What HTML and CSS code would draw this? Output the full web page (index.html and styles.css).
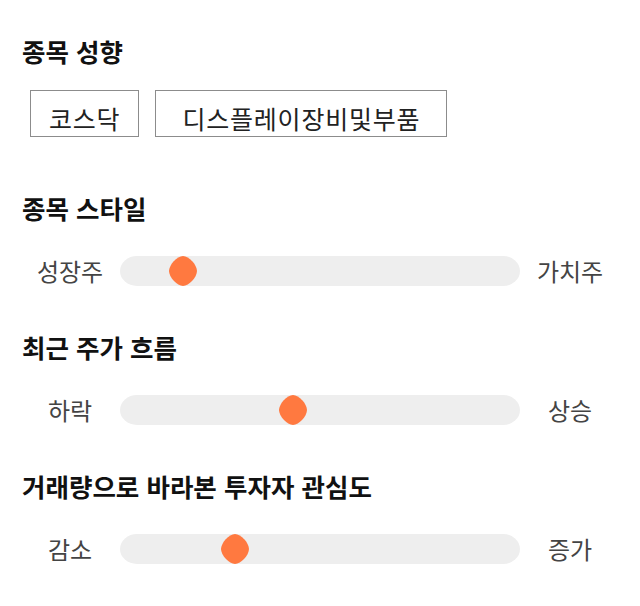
FILE: index.html
```html
<!DOCTYPE html>
<html lang="ko">
<head>
    <meta charset="UTF-8">
    <meta name="viewport" content="width=device-width, initial-scale=1.0">
    <title>종목 분석</title>
    <link rel="stylesheet" href="styles.css">
</head>
<body>
    <div class="page">
        <section class="block">
            <h2 class="block-title">종목 성향</h2>
            <div class="tags">
                <span class="tag">코스닥</span>
                <span class="tag tag-wide">디스플레이장비및부품</span>
            </div>
        </section>

        <section class="block">
            <h2 class="block-title">종목 스타일</h2>
            <div class="scale">
                <span class="scale-label">성장주</span>
                <div class="track">
                    <svg class="thumb" style="left: 12.25%" viewBox="0 0 28 30" width="28" height="30">
                        <path d="M14 0 C20 0 28 9 28 15 C28 21 20 30 14 30 C8 30 0 21 0 15 C0 9 8 0 14 0 Z" />
                    </svg>
                </div>
                <span class="scale-label">가치주</span>
            </div>
        </section>

        <section class="block">
            <h2 class="block-title">최근 주가 흐름</h2>
            <div class="scale">
                <span class="scale-label">하락</span>
                <div class="track">
                    <svg class="thumb" style="left: 39.75%" viewBox="0 0 28 30" width="28" height="30">
                        <path d="M14 0 C20 0 28 9 28 15 C28 21 20 30 14 30 C8 30 0 21 0 15 C0 9 8 0 14 0 Z" />
                    </svg>
                </div>
                <span class="scale-label">상승</span>
            </div>
        </section>

        <section class="block">
            <h2 class="block-title">거래량으로 바라본 투자자 관심도</h2>
            <div class="scale">
                <span class="scale-label">감소</span>
                <div class="track">
                    <svg class="thumb" style="left: 25.25%" viewBox="0 0 28 30" width="28" height="30">
                        <path d="M14 0 C20 0 28 9 28 15 C28 21 20 30 14 30 C8 30 0 21 0 15 C0 9 8 0 14 0 Z" />
                    </svg>
                </div>
                <span class="scale-label">증가</span>
            </div>
        </section>
    </div>
</body>
</html>
```

FILE: styles.css
```css
body {
    margin: 0;
    font-family: "Noto Sans CJK KR", "Noto Sans", sans-serif;
    color: #222;
    background: #fff;
}

.page {
    display: flex;
    flex-direction: column;
    gap: 45px;
    padding: 35px 20px 20px;
}

.block-title {
    margin: 0 0 0 2px;
    font-size: 25.5px;
    font-weight: 700;
    line-height: 32px;
    color: #111;
}

.tags {
    display: flex;
    gap: 16px;
    margin: 23px 0 0 10px;
}

.tag {
    border: 1px solid #8c8c8c;
    padding: 12px 18px 3px;
    font-size: 25px;
    letter-spacing: 0.8px;
    line-height: 30px;
    color: #222;
}

.tag-wide {
    padding-left: 26px;
    padding-right: 26px;
}

.block:nth-child(2) {
    margin-top: 10px;
}

.scale {
    display: flex;
    align-items: center;
    margin-top: 32px;
}

.scale-label {
    width: 100px;
    text-align: center;
    font-size: 24px;
    line-height: 30px;
    color: #444;
}

.track {
    position: relative;
    width: 400px;
    height: 30px;
    border-radius: 17px / 15px;
    background: #eeeeee;
}

.thumb {
    position: absolute;
    top: 0;
    fill: #ff7940;
}
```
